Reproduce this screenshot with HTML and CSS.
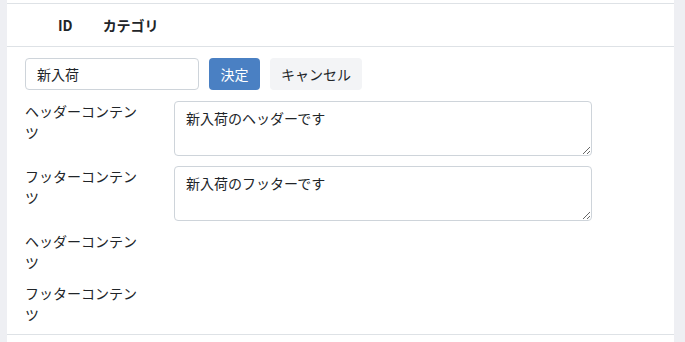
FILE: index.html
```html
<!DOCTYPE html>
<html lang="ja">
<head>
<meta charset="utf-8">
<link rel="stylesheet" href="styles.css">
</head>
<body>
<div class="panel">
  <div class="thead">
    <span class="th th-id">ID</span>
    <span class="th">カテゴリ</span>
  </div>
  <div class="body">
    <div class="edit-row">
      <input class="text-input" type="text" value="新入荷">
      <button class="btn btn-primary">決定</button>
      <button class="btn btn-light">キャンセル</button>
    </div>
    <div class="fields">
      <div class="field">
        <div class="label">ヘッダーコンテンツ</div>
        <textarea class="textarea">新入荷のヘッダーです</textarea>
      </div>
      <div class="field">
        <div class="label">フッターコンテンツ</div>
        <textarea class="textarea">新入荷のフッターです</textarea>
      </div>
      <div class="field">
        <div class="label">ヘッダーコンテンツ</div>
      </div>
      <div class="field">
        <div class="label">フッターコンテンツ</div>
      </div>
    </div>
  </div>
</div>
</body>
</html>
```

FILE: styles.css
```css
html, body {
  margin: 0;
  padding: 0;
  height: 100%;
}
body {
  background: #eeeff3;
  font-family: "Noto Sans CJK JP", "Noto Sans", sans-serif;
  font-size: 14px;
  color: #212529;
}
.panel {
  margin: 0 11px 0 7px;
  background: #fff;
  padding-top: 3px;
  height: 342px;
  box-sizing: border-box;
}
.thead {
  display: flex;
  align-items: center;
  height: 42px;
  border-top: 1px solid #dee2e6;
  border-bottom: 1px solid #dee2e6;
  padding-left: 51px;
  gap: 30px;
}
.th {
  font-weight: bold;
  font-size: 14px;
  line-height: 20px;
}
.body {
  padding: 11px 18px 9px;
  border-bottom: 1px solid #dee2e6;
}
.edit-row {
  display: flex;
  gap: 10px;
  align-items: center;
}
.text-input {
  width: 174px;
  height: 32px;
  box-sizing: border-box;
  border: 1px solid #ced4da;
  border-radius: 4px;
  padding: 0 11px;
  font-family: inherit;
  font-size: 14px;
  color: #212529;
}
.btn {
  height: 32px;
  box-sizing: border-box;
  border: none;
  border-radius: 4px;
  padding: 0;
  font-family: inherit;
  font-size: 14px;
  line-height: 32px;
}
.btn-primary {
  background: #4a80c3;
  color: #fff;
  width: 51px;
}
.btn-light {
  background: #f3f4f6;
  color: #212529;
  width: 92px;
}
.fields {
  margin-top: 11px;
  display: flex;
  flex-direction: column;
  gap: 10px;
}
.field {
  display: flex;
  align-items: flex-start;
}
.label {
  width: 120px;
  margin-right: 29px;
  line-height: 21px;
  font-size: 14px;
}
.textarea {
  width: 418px;
  height: 55px;
  box-sizing: border-box;
  border: 1px solid #ced4da;
  border-radius: 4px;
  padding: 6px 11px;
  font-family: inherit;
  font-size: 14px;
  line-height: 21px;
  color: #212529;
  margin: 0;
}
```
